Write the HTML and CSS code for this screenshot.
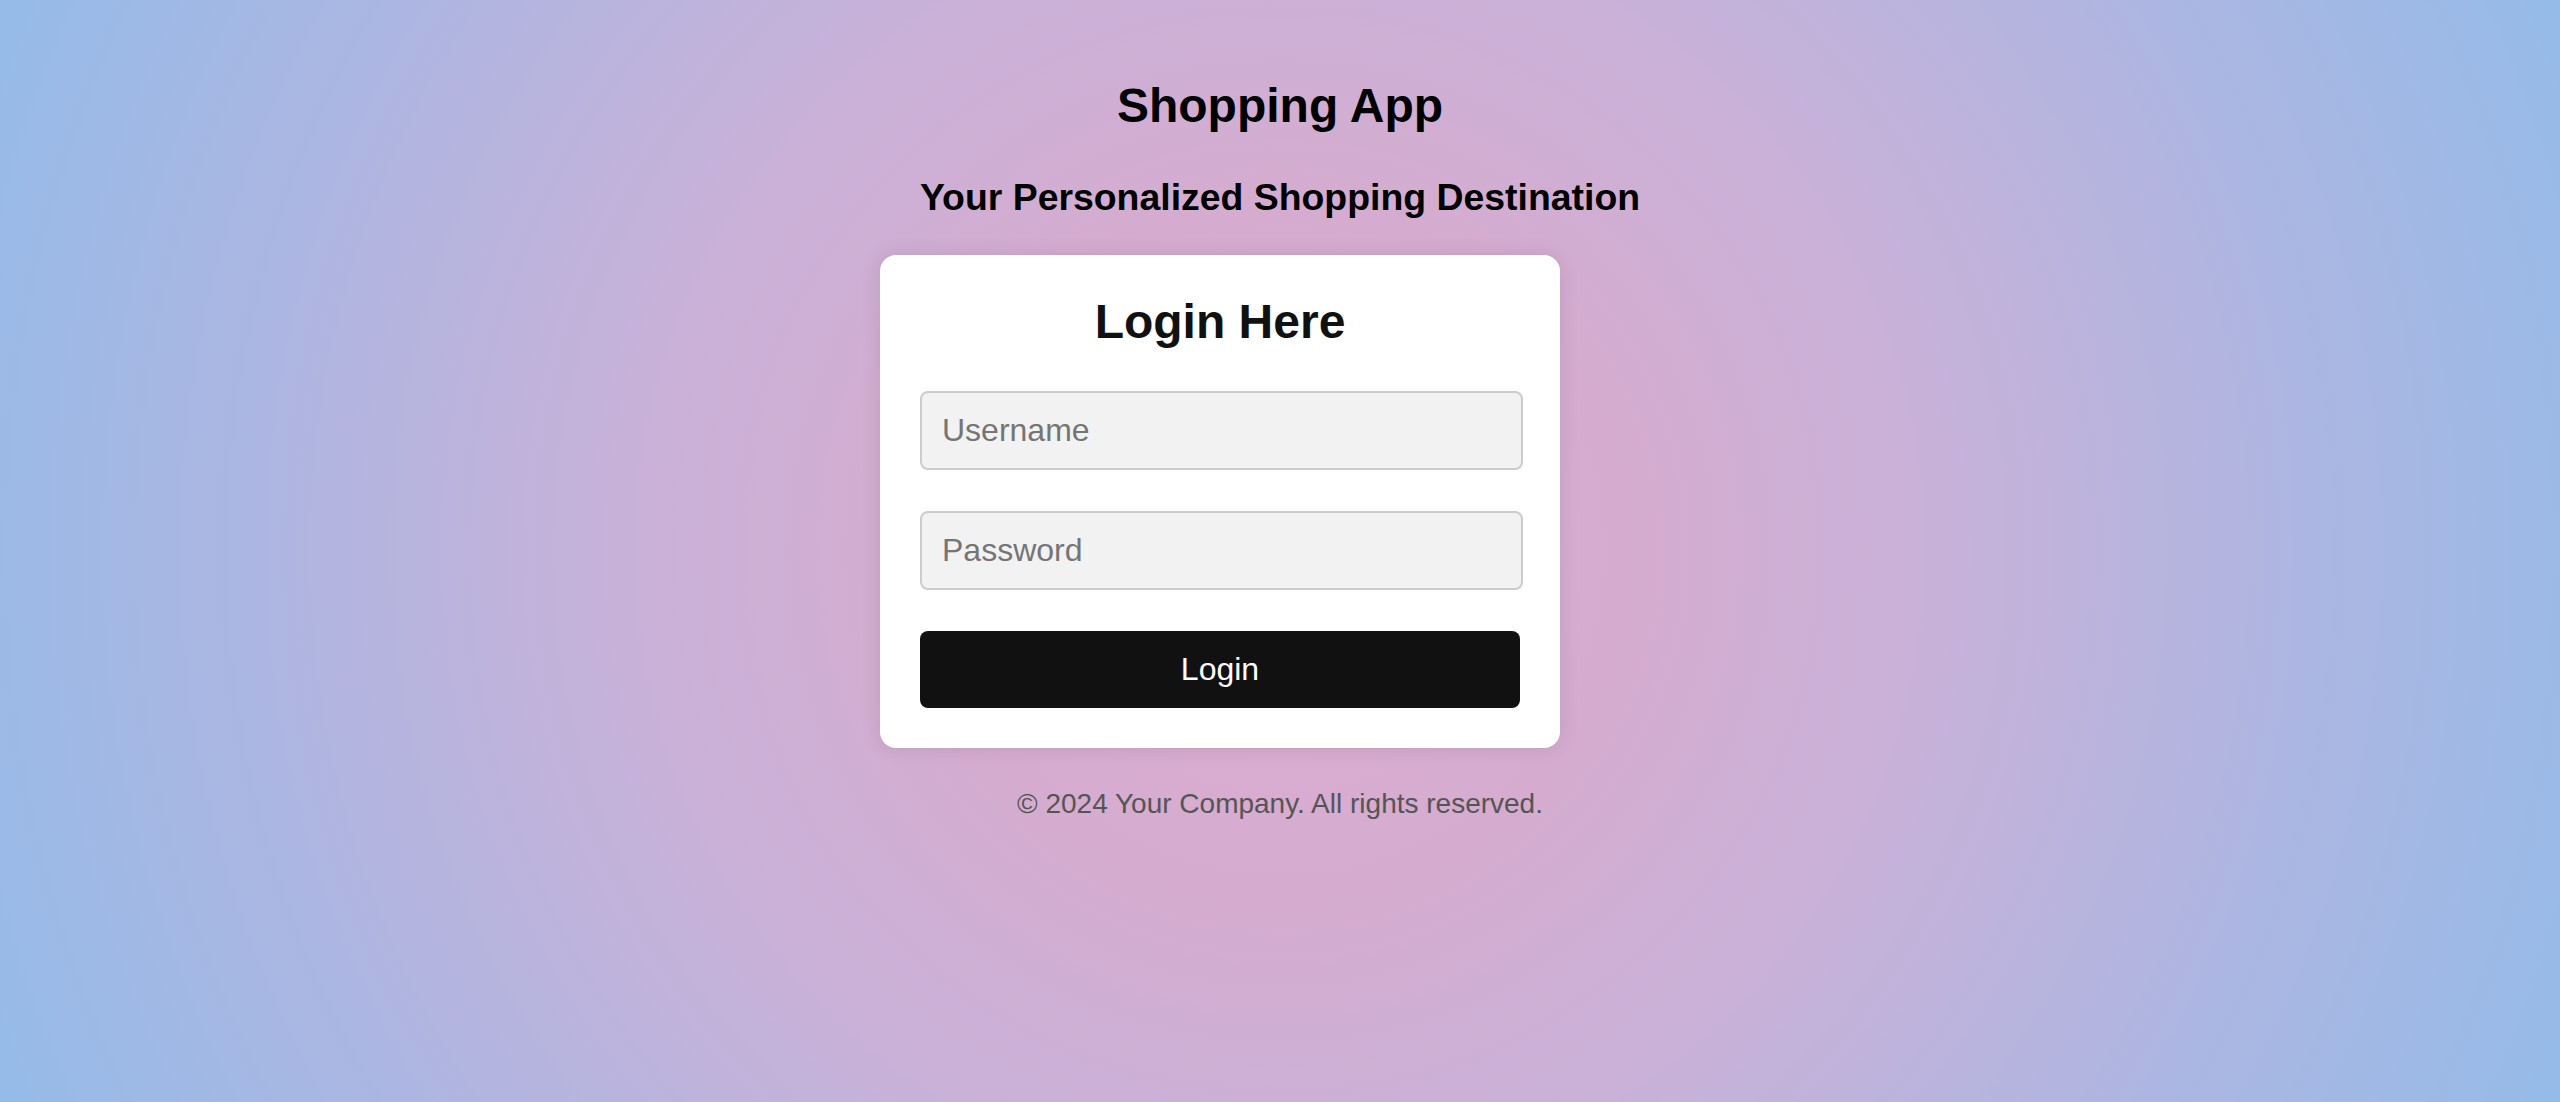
FILE: index.html
```html
<!DOCTYPE html>
<html lang="en">
<head>
<meta charset="utf-8">
<title>Shopping App - Login</title>
<link rel="stylesheet" href="styles.css">
</head>
<body>
<div class="page">
  <header class="header">
    <h1 class="title">Shopping App</h1>
    <h2 class="subtitle">Your Personalized Shopping Destination</h2>
  </header>
  <main class="card">
    <h2 class="card-title">Login Here</h2>
    <form class="form">
      <input class="field" type="text" placeholder="Username">
      <input class="field" type="password" placeholder="Password">
      <button class="btn" type="button">Login</button>
    </form>
  </main>
  <footer class="footer">© 2024 Your Company. All rights reserved.</footer>
</div>
</body>
</html>
```

FILE: styles.css
```css
html {
  height: 100%;
}
body {
  margin: 0;
  min-height: 100vh;
  font-family: "Liberation Sans", Arial, sans-serif;
  background: radial-gradient(circle at 50% 50%, #ddadd0 0%, #d5acd0 25%, #cab1d8 45%, #abb6e2 75%, #95bbe8 100%);
  background-attachment: fixed;
}
.page {
  display: flex;
  flex-direction: column;
  align-items: center;
  padding-top: 78px;
}
.header {
  display: flex;
  flex-direction: column;
  align-items: center;
}
.title {
  margin: 0;
  font-size: 48px;
  line-height: 56px;
  font-weight: bold;
  color: #000;
}
.subtitle {
  margin: 42px 0 0;
  font-size: 37.4px;
  line-height: 42px;
  font-weight: bold;
  color: #000;
}
.card {
  box-sizing: border-box;
  width: 680px;
  margin: 37px 120px 0 0;
  padding: 39px 40px 40px;
  background: #fff;
  border-radius: 16px;
  box-shadow: 0 0 20px rgba(0, 0, 0, 0.1);
}
.card-title {
  margin: 0;
  text-align: center;
  font-size: 48px;
  line-height: 56px;
  font-weight: bold;
  color: #111;
}
.form {
  display: flex;
  flex-direction: column;
  gap: 41px;
  margin-top: 41px;
}
.field {
  box-sizing: border-box;
  width: calc(100% + 3px);
  height: 79px;
  padding: 0 20px;
  border: 2px solid #cccccc;
  border-radius: 8px;
  background: #f2f2f2;
  font-family: "Liberation Sans", Arial, sans-serif;
  font-size: 32px;
  color: #333;
  outline: none;
}
.field::placeholder {
  color: #757575;
}
.btn {
  width: 100%;
  height: 77px;
  border: none;
  border-radius: 8px;
  background: #111111;
  color: #fff;
  font-family: "Liberation Sans", Arial, sans-serif;
  font-size: 32px;
  cursor: pointer;
}
.footer {
  margin-top: 40px;
  font-size: 28px;
  line-height: 32px;
  color: #555;
}
```
